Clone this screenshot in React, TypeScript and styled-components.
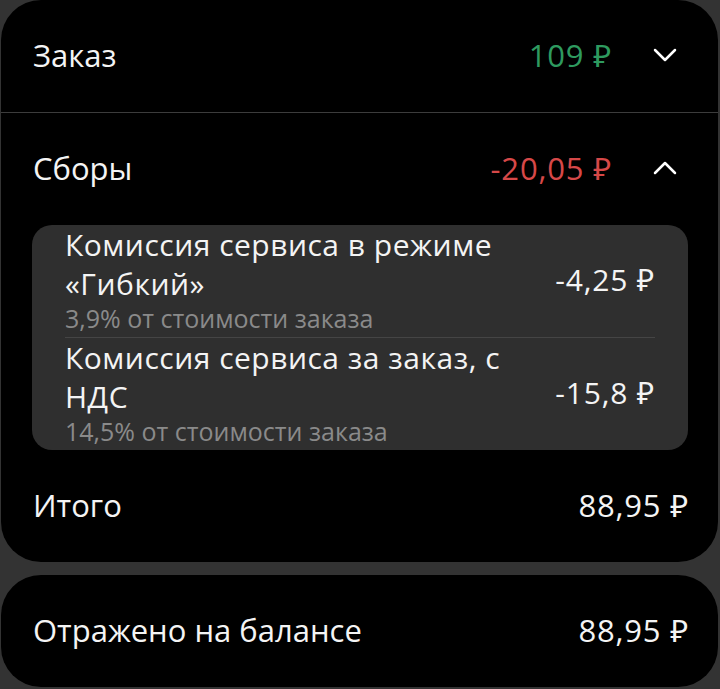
import styled, { createGlobalStyle } from 'styled-components';

const GlobalStyle = createGlobalStyle`
  html, body {
    margin: 0;
    padding: 0;
    background: #333333;
  }
  body {
    font-family: 'Open Sans', 'Noto Sans', 'DejaVu Sans', sans-serif;
    color: #f4f4f4;
    -webkit-font-smoothing: antialiased;
  }
`;

type Fee = {
  title: string;
  note: string;
  amount: string;
};

const fees: Fee[] = [
  {
    title: 'Комиссия сервиса в режиме «Гибкий»',
    note: '3,9% от стоимости заказа',
    amount: '-4,25 ₽',
  },
  {
    title: 'Комиссия сервиса за заказ, с НДС',
    note: '14,5% от стоимости заказа',
    amount: '-15,8 ₽',
  },
];

function Chevron({ up }: { up?: boolean }) {
  return (
    <svg width='24' height='24' viewBox='0 0 24 24' fill='none'>
      <path
        d={up ? 'M2 17L12 7L22 17' : 'M2 7L12 17L22 7'}
        stroke='#ffffff'
        strokeWidth='2.5'
        strokeLinecap='round'
        strokeLinejoin='round'
      />
    </svg>
  );
}

function App() {
  return (
    <>
      <GlobalStyle />
      <Page>
        <Card>
          <Row>
            <Label>Заказ</Label>
            <Side>
              <Amount $tone='green'>109 ₽</Amount>
              <Toggle>
                <Chevron />
              </Toggle>
            </Side>
          </Row>
          <Divider />
          <Row>
            <Label>Сборы</Label>
            <Side>
              <Amount $tone='red'>-20,05 ₽</Amount>
              <Toggle>
                <Chevron up />
              </Toggle>
            </Side>
          </Row>
          <FeeBox>
            {fees.map((fee) => (
              <FeeItem key={fee.title}>
                <FeeText>
                  <FeeTitle>{fee.title}</FeeTitle>
                  <FeeNote>{fee.note}</FeeNote>
                </FeeText>
                <FeeAmount>{fee.amount}</FeeAmount>
              </FeeItem>
            ))}
          </FeeBox>
          <Row>
            <Label>Итого</Label>
            <Amount>88,95 ₽</Amount>
          </Row>
        </Card>
        <Card>
          <Row>
            <Label>Отражено на балансе</Label>
            <Amount>88,95 ₽</Amount>
          </Row>
        </Card>
      </Page>
    </>
  );
}

export default App;

const Page = styled.main`
  display: flex;
  flex-direction: column;
  gap: 13px;
  width: 720px;
  height: 689px;
  box-sizing: border-box;
  padding: 0 2px 0 1px;
`;

const Card = styled.section`
  display: flex;
  flex-direction: column;
  background: #000000;
  border-radius: 40px;
  overflow: hidden;
`;

const Row = styled.div`
  display: flex;
  align-items: center;
  justify-content: space-between;
  box-sizing: border-box;
  height: 112px;
  padding: 0 29px 2px 32px;
`;

const Label = styled.span`
  font-size: 31px;
  line-height: 1;
`;

const Side = styled.div`
  display: flex;
  align-items: center;
  gap: 29px;
`;

const Amount = styled.span<{ $tone?: 'green' | 'red' }>`
  font-size: 31px;
  line-height: 1;
  letter-spacing: 0.8px;
  color: ${(p) =>
    p.$tone === 'green' ? '#2e9a5f' : p.$tone === 'red' ? '#d64848' : '#f4f4f4'};
`;

const Toggle = styled.span`
  display: flex;
  justify-content: center;
  width: 48px;
`;

const Divider = styled.hr`
  margin: 0;
  border: none;
  height: 1px;
  background: #3c3c3c;
`;

const FeeBox = styled.div`
  display: flex;
  flex-direction: column;
  margin: 0 30px 0 31px;
  background: #2f2f2f;
  border-radius: 20px;
`;

const FeeItem = styled.div`
  display: flex;
  align-items: center;
  justify-content: space-between;
  gap: 24px;
  margin: 0 33px;
  padding-bottom: 4px;
  & + & {
    border-top: 1px solid #454545;
  }
`;

const FeeText = styled.div`
  display: flex;
  flex-direction: column;
  max-width: 450px;
`;

const FeeTitle = styled.span`
  font-size: 30px;
  line-height: 39px;
  letter-spacing: 0.5px;
`;

const FeeNote = styled.span`
  font-size: 25px;
  line-height: 30px;
  color: #8a8a8a;
`;

const FeeAmount = styled.span`
  font-size: 30px;
  letter-spacing: 0.8px;
  white-space: nowrap;
`;
